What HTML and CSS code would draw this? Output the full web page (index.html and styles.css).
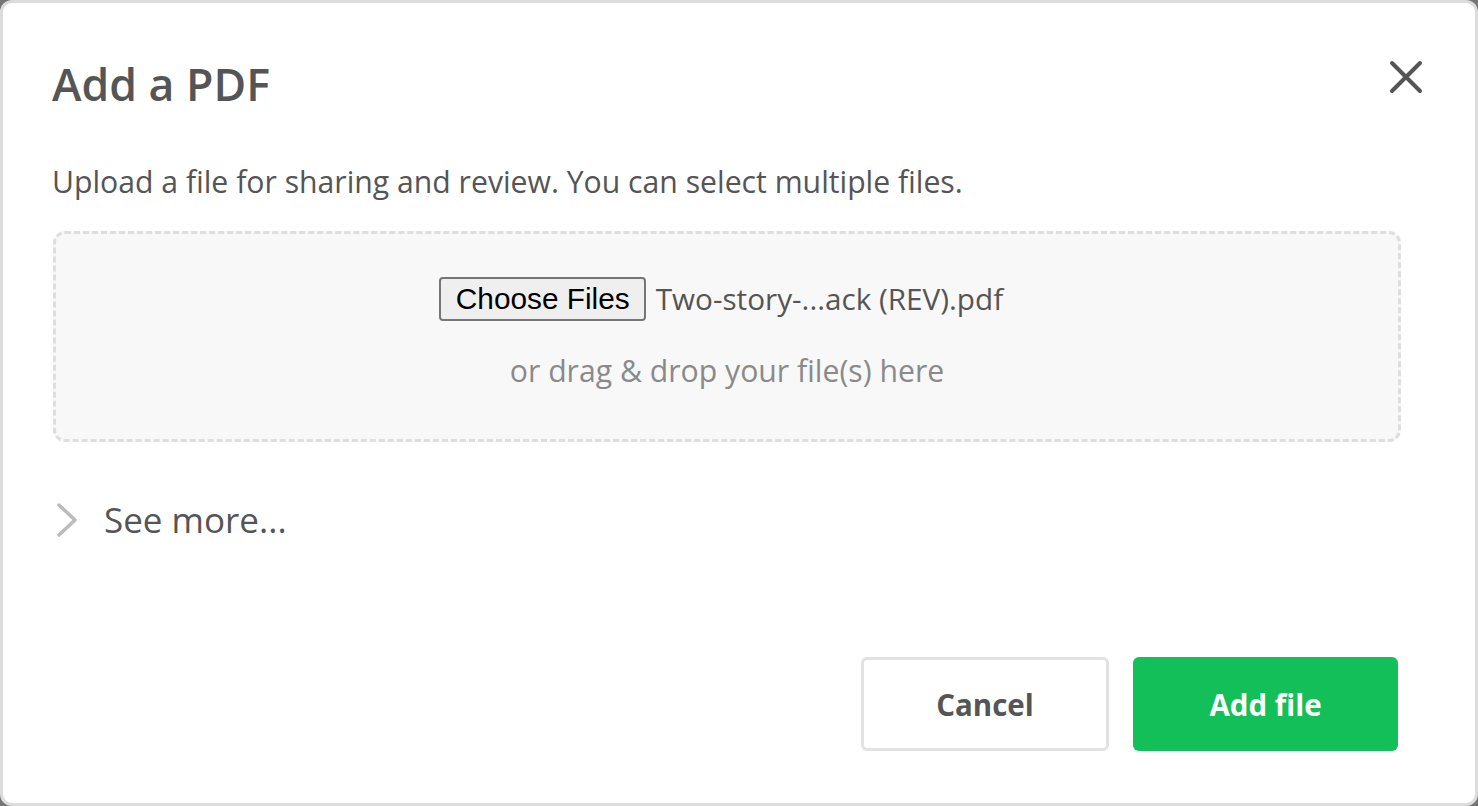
FILE: index.html
```html
<!DOCTYPE html>
<html lang="en">
<head>
    <meta charset="UTF-8">
    <meta name="viewport" content="width=device-width, initial-scale=1.0">
    <title>Add a PDF</title>
    <link rel="stylesheet" href="styles.css">
</head>
<body>
    <div class="modal">
        <div class="modal-header">
            <h1>Add a PDF</h1>
            <button class="close-btn" aria-label="Close">
                <svg width="34" height="34" viewBox="0 0 34 34">
                    <path d="M3 3 L31 31 M31 3 L3 31" stroke="#555" stroke-width="4" stroke-linecap="round" fill="none"/>
                </svg>
            </button>
        </div>

        <p class="description">Upload a file for sharing and review. You can select multiple files.</p>

        <div class="dropzone">
            <div class="file-row">
                <span class="choose-btn">Choose Files</span>
                <span class="file-name">Two-story-...ack (REV).pdf</span>
            </div>
            <div class="drop-hint">or drag &amp; drop your file(s) here</div>
        </div>

        <div class="see-more">
            <svg width="22" height="36" viewBox="0 0 22 36">
                <path d="M3 3 L19 18 L3 33" stroke="#bbb" stroke-width="3.5" stroke-linecap="round" stroke-linejoin="round" fill="none"/>
            </svg>
            <span>See more...</span>
        </div>

        <div class="modal-footer">
            <button class="btn btn-cancel">Cancel</button>
            <button class="btn btn-primary">Add file</button>
        </div>
    </div>
</body>
</html>
```

FILE: styles.css
```css
* {
    margin: 0;
    padding: 0;
    box-sizing: border-box;
}

body {
    font-family: 'Open Sans', 'Noto Sans', sans-serif;
    background: #757575;
    color: #555;
    height: 806px;
    overflow: hidden;
}

.modal {
    height: 806px;
    background: #fff;
    border: 3px solid #dcdcdc;
    border-radius: 12px;
    padding: 51px 74px 52px 49px;
    display: flex;
    flex-direction: column;
}

.modal-header {
    display: flex;
    justify-content: space-between;
    align-items: flex-start;
}

h1 {
    font-size: 44.6px;
    line-height: 60px;
    font-weight: 600;
    color: #555;
}

.close-btn {
    border: none;
    background: none;
    margin-top: 6px;
    margin-right: -22px;
    width: 34px;
    height: 34px;
    cursor: pointer;
}

.close-btn svg {
    display: block;
}

.description {
    margin-top: 48px;
    font-size: 30.2px;
    line-height: 40px;
}

.dropzone {
    margin-top: 29px;
    margin-left: 1px;
    height: 211px;
    border: 3px dashed #dedede;
    border-radius: 12px;
    background: #f8f8f8;
    padding-top: 43px;
    display: flex;
    flex-direction: column;
    align-items: center;
}

.file-row {
    display: flex;
    align-items: center;
    gap: 10px;
    padding-right: 12px;
}

.choose-btn {
    font-family: 'Liberation Sans', Arial, sans-serif;
    font-size: 29.8px;
    line-height: 34px;
    color: #000;
    background: #efefef;
    border: 2.5px solid #767676;
    border-radius: 4px;
    padding: 2px 14px 2px 15px;
    height: 44px;
    display: inline-flex;
    align-items: center;
}

.file-name {
    font-size: 29.7px;
    line-height: 44px;
    color: #555;
}

.drop-hint {
    margin-top: 30px;
    font-size: 30.2px;
    line-height: 40px;
    color: #8a8a8a;
}

.see-more {
    margin-top: 54px;
    display: flex;
    align-items: center;
    gap: 26px;
    margin-left: 4px;
    height: 48px;
}

.see-more svg {
    display: block;
}

.see-more span {
    font-size: 35px;
    line-height: 48px;
    color: #555;
}

.modal-footer {
    margin-top: auto;
    margin-right: 3px;
    display: flex;
    justify-content: flex-end;
    gap: 24px;
}

.btn {
    font-family: 'Open Sans', 'Noto Sans', sans-serif;
    font-size: 29.5px;
    font-weight: 700;
    height: 94px;
    border-radius: 6px;
    cursor: pointer;
}

.btn-cancel {
    width: 248px;
    background: #fff;
    border: 3px solid #e2e2e2;
    color: #555;
}

.btn-primary {
    width: 265px;
    background: #12bf59;
    border: none;
    color: #fff;
}
```
